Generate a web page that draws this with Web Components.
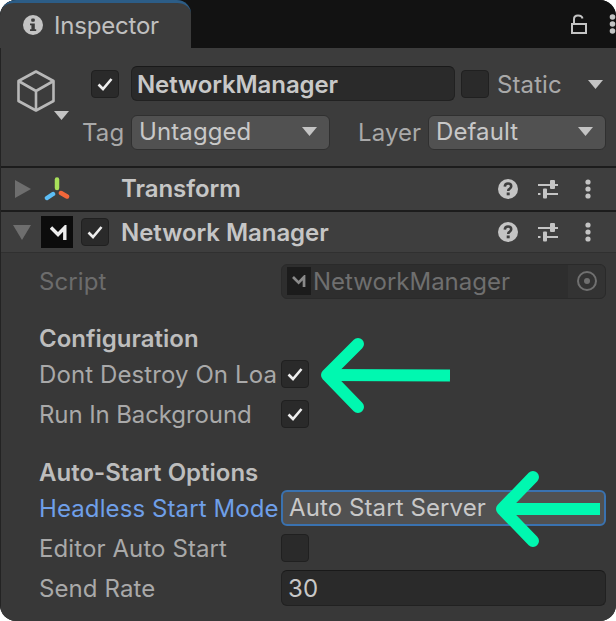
<!DOCTYPE html>
<html>
<head>
<meta charset="utf-8">
<style>
  html, body { margin: 0; padding: 0; background: #ffffff; }
  body { width: 616px; height: 621px; overflow: hidden; font-family: Inter, "Noto Sans", sans-serif; font-size: 24px; color: #c4c4c4; }
</style>
</head>
<body>

<inspector-window>
  <inspector-tabs slot="tabs" label="Inspector"></inspector-tabs>

  <object-head slot="head" name="NetworkManager"></object-head>

  <comp-header title="Transform" kind="transform"></comp-header>
  <comp-header title="Network Manager" kind="script" open></comp-header>

  <comp-body>
    <prop-row label="Script" dim style="margin-top:10px"><obj-field value="NetworkManager"></obj-field></prop-row>

    <section-title style="margin-top:26px">Configuration</section-title>
    <prop-row label="Dont Destroy On Load" style="margin-top:3px"><tick-box checked></tick-box></prop-row>
    <prop-row label="Run In Background" style="margin-top:4px;letter-spacing:-0.1px"><tick-box checked></tick-box></prop-row>

    <section-title style="margin-top:27px">Auto-Start Options</section-title>
    <prop-row label="Headless Start Mode" accent style="margin-top:3px"><drop-down value="Auto Start Server" focused no-arrow></drop-down></prop-row>
    <prop-row label="Editor Auto Start" style="margin-top:4px"><tick-box></tick-box></prop-row>
    <prop-row label="Send Rate" style="margin-top:4px"><text-field value="30"></text-field></prop-row>
  </comp-body>

  <svg slot="over" class="arrows" width="616" height="621" viewBox="0 0 616 621" fill="none" stroke="#00f8b0" stroke-width="12" stroke-linecap="round" stroke-linejoin="round">
    <path d="M358 344 L327 375 L358 407" />
    <path d="M327 375 L450 375.500" stroke-linecap="butt" />
    <path d="M533 477 L502 509 L533 541" />
    <path d="M502 509 L600 509" stroke-linecap="butt" />
  </svg>
</inspector-window>

<script>
  const TICK = `<svg width="16" height="14" viewBox="0 0 16 14" fill="none" stroke="#eeeeee" stroke-width="2.600"><path d="M1.500 7.500 L6 12 L14.500 2" /></svg>`;
  const M_LOGO = `<path d="M1 2.500 L8 9.500 L14.800 2.500 V15" fill="none" stroke="currentColor" stroke-width="3.400" />`;

  function makeEl(name, html, init) {
    const tmpl = document.createElement('template');
    tmpl.innerHTML = html;
    customElements.define(name, class extends HTMLElement {
      constructor() {
        super();
        this.attachShadow({mode: 'open'}).appendChild(tmpl.content.cloneNode(true));
      }
      connectedCallback() {
        // attributes fill the [data-text] holes
        this.shadowRoot.querySelectorAll('[data-text]').forEach(el => {
          el.textContent = this.getAttribute(el.dataset.text) || '';
        });
        if (init) init.call(this, this.shadowRoot);
      }
    });
  }

  makeEl('inspector-window', `
    <style>
      :host { display: flex; flex-direction: column; position: relative; width: 616px; height: 621px; }
      .frame { flex: 1; display: flex; flex-direction: column; border-radius: 16px; overflow: hidden; background: #383838; }
      .panel { flex: 1; display: flex; flex-direction: column; border-left: 1px solid #232323; }
      ::slotted(.arrows) { position: absolute; left: 0; top: 0; }
    </style>
    <div class="frame">
      <slot name="tabs"></slot>
      <div class="panel">
        <slot name="head"></slot>
        <slot></slot>
      </div>
    </div>
    <slot name="over"></slot>
  `);

  makeEl('inspector-tabs', `
    <style>
      :host { display: flex; height: 48px; background: #121212; color: #c4c4c4; flex: none; }
      .tab { width: 191px; box-sizing: border-box; border-top: 3px solid #2c5d87; border-radius: 14px 14px 0 0;
        background: #3c3c3c; display: flex; align-items: center; gap: 11px; padding: 0 0 1px 23px; }
      .tab svg { flex: none; }
      .label { font-size: 24px; color: #c0c0c0; letter-spacing: -0.2px; }
      .space { flex: 1; }
      .tools { display: flex; align-items: center; gap: 22px; margin-top: -1px; }
    </style>
    <div class="tab">
      <svg width="20" height="20" viewBox="0 0 20 20"><circle cx="10" cy="10" r="10" fill="#c4c4c4"/><rect x="8.200" y="3.500" width="3.600" height="3.200" rx="1" fill="#3c3c3c"/><path d="M7 8.500 H11.800 V14.200 H13.200 V16 H7 V14.200 H8.400 V10.200 H7 Z" fill="#3c3c3c"/></svg>
      <span class="label" data-text="label"></span>
    </div>
    <div class="space"></div>
    <div class="tools">
      <svg width="16" height="20" viewBox="0 0 16 20" fill="none" stroke="#c4c4c4" stroke-width="2"><rect x="1" y="10" width="14" height="9"/><path d="M3 10 V5 Q3 1.500 7 1.500 Q11 1.500 11.500 4.500"/></svg>
      <svg width="7" height="20" viewBox="0 0 7 20" fill="#c4c4c4"><circle cx="3.500" cy="3" r="2.800"/><circle cx="3.500" cy="10" r="2.800"/><circle cx="3.500" cy="17" r="2.800"/></svg>
    </div>
  `);

  makeEl('object-head', `
    <style>
      :host { display: flex; flex-direction: column; height: 118px; flex: none; background: #3c3c3c; box-sizing: border-box; padding: 18px 10px 0 15px; letter-spacing: 0.1px; }
      .row { display: flex; align-items: center; }
      .one { height: 35px; }
      .two { height: 35px; margin-top: 14px; }
      .cube { flex: none; position: relative; width: 40px; height: 0; }
      .cube svg.c { position: absolute; left: 0; top: -14px; }
      .cube svg.t { position: absolute; left: 38px; top: 27px; }
      .name { width: 324px; height: 35px; box-sizing: border-box; background: #2a2a2a; border: 1px solid #212121; border-top-color: #191919; border-radius: 6px;
        margin-left: 12px; font-weight: 600; font-size: 24px; line-height: 35px; padding-left: 5px; color: #c8c8c8; letter-spacing: -0.1px; }
      .static { margin-left: 8px; color: #a9a9a9; padding-top: 2px; }
      .tag { margin-left: 66px; width: 49px; color: #a9a9a9; }
      .layer { margin-left: 28px; width: 70px; color: #a9a9a9; }
      svg.arrow { margin-left: 26px; margin-top: 1px; }
    </style>
    <div class="row one">
      <div class="cube">
        <svg class="c" width="40" height="42" viewBox="0 0 40 42" fill="none" stroke="#b8b8b8" stroke-width="2.600" stroke-linejoin="round"><path d="M20 1.500 L37.500 11 V31 L20 40.500 L2.500 31 V11 Z"/><path d="M2.500 11 L20 21 L37.500 11 M20 21 V40.500"/></svg>
        <svg class="t" width="15" height="9" viewBox="0 0 15 9"><path d="M0 0 H15 L7.500 9 Z" fill="#c4c4c4"/></svg>
      </div>
      <tick-box checked style="margin-left:35px"></tick-box>
      <div class="name" data-text="name"></div>
      <tick-box style="margin-left:6px"></tick-box>
      <span class="static">Static</span>
      <svg class="arrow" width="15" height="9" viewBox="0 0 15 9"><path d="M0 0 H15 L7.500 9 Z" fill="#c4c4c4"/></svg>
    </div>
    <div class="row two">
      <span class="tag">Tag</span>
      <drop-down value="Untagged" style="flex:none;width:199px;padding-bottom:3px"></drop-down>
      <span class="layer">Layer</span>
      <drop-down value="Default" style="flex:none;width:178px;padding-bottom:3px"></drop-down>
    </div>
  `);

  makeEl('comp-header', `
    <style>
      :host { display: flex; align-items: center; flex: none; height: 42px; box-sizing: content-box; background: #3e3e3e; border-top: 2px solid #1c1c1c; }
      :host([open]) { height: 40px; border-bottom: 1px solid #303030; }
      .fold { flex: none; width: 40px; display: flex; padding-left: 14px; box-sizing: border-box; }
      .glyph { flex: none; width: 32px; height: 32px; display: flex; align-items: center; justify-content: center; }
      .glyph.script { background: #0c0c0c; color: #eee; }
      .box { flex: none; width: 36px; display: flex; justify-content: flex-end; }
      .title { flex: 1; font-weight: 600; color: #c6c6c6; white-space: nowrap; padding-left: 12px; letter-spacing: -0.05px; margin-top: -2px; }
      :host([open]) .title { margin-top: 0; }
      .tools { flex: none; display: flex; align-items: center; padding-right: 25px; gap: 20px; }
      .tools .k { margin-left: 7px; }
    </style>
    <div class="fold"></div>
    <div class="glyph"></div>
    <div class="box"></div>
    <div class="title" data-text="title"></div>
    <div class="tools">
      <svg width="20" height="20" viewBox="0 0 20 20"><circle cx="10" cy="10" r="10" fill="#c4c4c4"/><path d="M6.800 7.600 Q7 4.500 10 4.500 Q13.200 4.500 13.200 7.200 Q13.200 8.800 11.500 9.800 Q10.200 10.500 10.200 12" fill="none" stroke="#3e3e3e" stroke-width="2.600"/><rect x="8.700" y="13.500" width="3" height="2.800" fill="#3e3e3e"/></svg>
      <svg width="20" height="20" viewBox="0 0 20 20" fill="#c4c4c4"><rect x="0" y="5" width="12" height="2"/><rect x="12" y="1" width="5" height="9" rx="1"/><rect x="17" y="5" width="3" height="2"/><rect x="0" y="14" width="2.500" height="2"/><rect x="5" y="9.500" width="4" height="10" rx="1"/><rect x="8" y="14" width="12" height="2"/></svg>
      <svg class="k" width="6" height="20" viewBox="0 0 6 20" fill="#c4c4c4"><circle cx="3" cy="3" r="2.600"/><circle cx="3" cy="10" r="2.600"/><circle cx="3" cy="17" r="2.600"/></svg>
    </div>
  `, function (root) {
    const open = this.hasAttribute('open');
    root.querySelector('.fold').innerHTML = open
      ? `<svg width="18" height="15" viewBox="0 0 18 15" style="margin-left:-2px"><path d="M0 0 H18 L9 15 Z" fill="#6e6e6e"/></svg>`
      : `<svg width="16" height="18" viewBox="0 0 16 18"><path d="M0 0 L16 9 L0 18 Z" fill="#6e6e6e"/></svg>`;
    const glyph = root.querySelector('.glyph');
    if (this.getAttribute('kind') == 'script') {
      glyph.classList.add('script');
      glyph.innerHTML = `<svg width="17" height="15" viewBox="0 0 17 15" style="margin-left:2px">${M_LOGO}</svg>`;
      root.querySelector('.box').innerHTML = `<tick-box checked></tick-box>`;
    } else {
      glyph.innerHTML = `<svg width="26" height="24" viewBox="0 0 26 24" fill="none" stroke-width="4.500" stroke-linecap="round"><path d="M13 2.500 V11" stroke="#a8e05a"/><path d="M9 17 L3 21" stroke="#5cbdf5"/><path d="M17 16 L23 19.500" stroke="#f2673a"/></svg>`;
    }
  });

  makeEl('comp-body', `
    <style>
      :host { display: flex; flex-direction: column; flex: 1; padding: 0 10px 0 38px; background: #383838; letter-spacing: 0.1px; }
    </style>
    <slot></slot>
  `);

  makeEl('section-title', `
    <style>
      :host { display: block; height: 28px; line-height: 28px; font-weight: 600; color: #bdbdbd; letter-spacing: 0; }
    </style>
    <slot></slot>
  `);

  makeEl('prop-row', `
    <style>
      :host { display: flex; align-items: center; min-height: 36px; color: #a9a9a9; }
      :host([dim]) { color: #6c6c6c; }
      :host([accent]) { color: #6f9fe8; }
      :host([accent]) .label { overflow: visible; }
      .label { flex: none; width: 237px; margin-right: 5px; overflow: hidden; white-space: nowrap; }
      .val { flex: 1; min-width: 0; display: flex; }
    </style>
    <div class="label" data-text="label"></div>
    <div class="val"><slot></slot></div>
  `);

  makeEl('tick-box', `
    <style>
      :host { display: flex; align-items: center; justify-content: center; flex: none; width: 28px; height: 28px; box-sizing: border-box;
        background: #2a2a2a; border: 1px solid #202020; border-radius: 4px; }
    </style>
    <span id="mark" style="display:flex"></span>
  `, function (root) {
    if (this.hasAttribute('checked')) root.getElementById('mark').innerHTML = TICK;
  });

  makeEl('drop-down', `
    <style>
      :host { display: flex; align-items: center; flex: 1; height: 35px; box-sizing: border-box; background: #515151; border: 1px solid #303030;
        border-radius: 6px; padding: 0 12px 1px 7px; color: #c8c8c8; }
      :host([focused]) { height: 36px; border: 2px solid #3a72b0; padding-left: 6px; }
      .v { flex: 1; white-space: nowrap; }
      :host([no-arrow]) svg { display: none; }
    </style>
    <span class="v" data-text="value"></span>
    <svg width="15" height="9" viewBox="0 0 15 9"><path d="M0 0 H15 L7.500 9 Z" fill="#c4c4c4"/></svg>
  `);

  makeEl('text-field', `
    <style>
      :host { display: flex; align-items: center; flex: 1; height: 36px; box-sizing: border-box; background: #2a2a2a; border: 1px solid #212121; border-top-color: #191919;
        border-radius: 6px; padding: 0 6px; color: #c8c8c8; }
    </style>
    <span data-text="value"></span>
  `);

  makeEl('obj-field', `
    <style>
      :host { display: flex; align-items: center; flex: 1; height: 35px; box-sizing: border-box; background: #2e2e2e; border: 1px solid #2a2a2a;
        border-radius: 6px; padding-left: 5px; color: #6f6f6f; overflow: hidden; letter-spacing: 0; }
      .g { flex: none; width: 24px; height: 28px; background: #1c1c1c; color: #8a8a8a; display: flex; align-items: center; justify-content: center; margin-right: 2px; }
      .v { flex: 1; white-space: nowrap; }
      .pick { flex: none; width: 37px; height: 100%; background: #333333; display: flex; align-items: center; justify-content: center; }
    </style>
    <div class="g"><svg width="14" height="12" viewBox="0 0 17 15">${M_LOGO}</svg></div>
    <span class="v" data-text="value"></span>
    <div class="pick"><svg width="20" height="20" viewBox="0 0 20 20" fill="none" stroke="#707070" stroke-width="2"><circle cx="10" cy="10" r="9"/><circle cx="10" cy="10" r="3" fill="#707070" stroke="none"/></svg></div>
  `);
</script>
</body>
</html>
